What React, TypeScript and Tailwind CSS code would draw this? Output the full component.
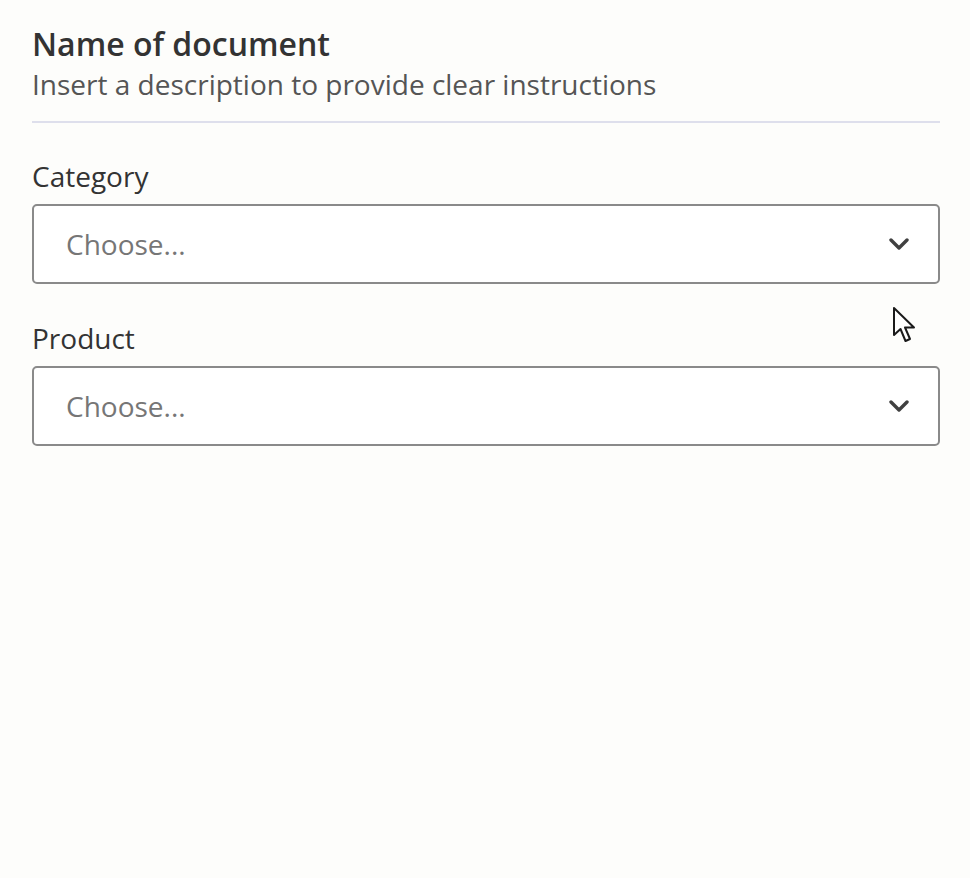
import React from 'react';

const Chevron = () => (
  <svg width="20" height="12" viewBox="0 0 20 12" fill="none">
    <path d="M2 2 L10 10 L18 2" stroke="#404040" strokeWidth="3.4" strokeLinecap="round" strokeLinejoin="round" />
  </svg>
);

const Select = ({ label }: { label: string }) => (
  <div>
    <div className="text-[28px] leading-[36px] text-[#333333] mb-[10px]">{label}</div>
    <div className="h-[80px] rounded-[5px] border-2 border-[#8a8a8a] bg-white flex items-center justify-between pl-[32px] pr-[29px]">
      <span className="text-[28px] text-[#767676]">Choose...</span>
      <Chevron />
    </div>
  </div>
);

const Cursor = () => (
  <svg className="absolute left-[892px] top-[306px]" width="28" height="40" viewBox="0 0 28 40">
    <path
      d="M2 2 L2 29 L8.5 23 L13.5 35 L18 33 L13 21.5 L22 21.5 Z"
      fill="#ffffff"
      stroke="#1a1a1a"
      strokeWidth="2"
      strokeLinejoin="round"
    />
  </svg>
);

const App = () => {
  return (
    <div className="relative min-h-[878px] w-full bg-[#fdfdfb] pl-8 pr-[30px] pt-[24px]" style={{ fontFamily: '"Open Sans", "Noto Sans", sans-serif' }}>
      <h1 className="text-[32px] leading-[40px] font-semibold text-[#333333]">Name of document</h1>
      <p className="text-[28px] leading-[40px] text-[#555555]">Insert a description to provide clear instructions</p>
      <div className="h-[2px] bg-[#dedfec] mt-[17px]" />
      <div className="mt-[35px] flex flex-col gap-[36px]">
        <Select label="Category" />
        <Select label="Product" />
      </div>
      <Cursor />
    </div>
  );
};

export default App;
